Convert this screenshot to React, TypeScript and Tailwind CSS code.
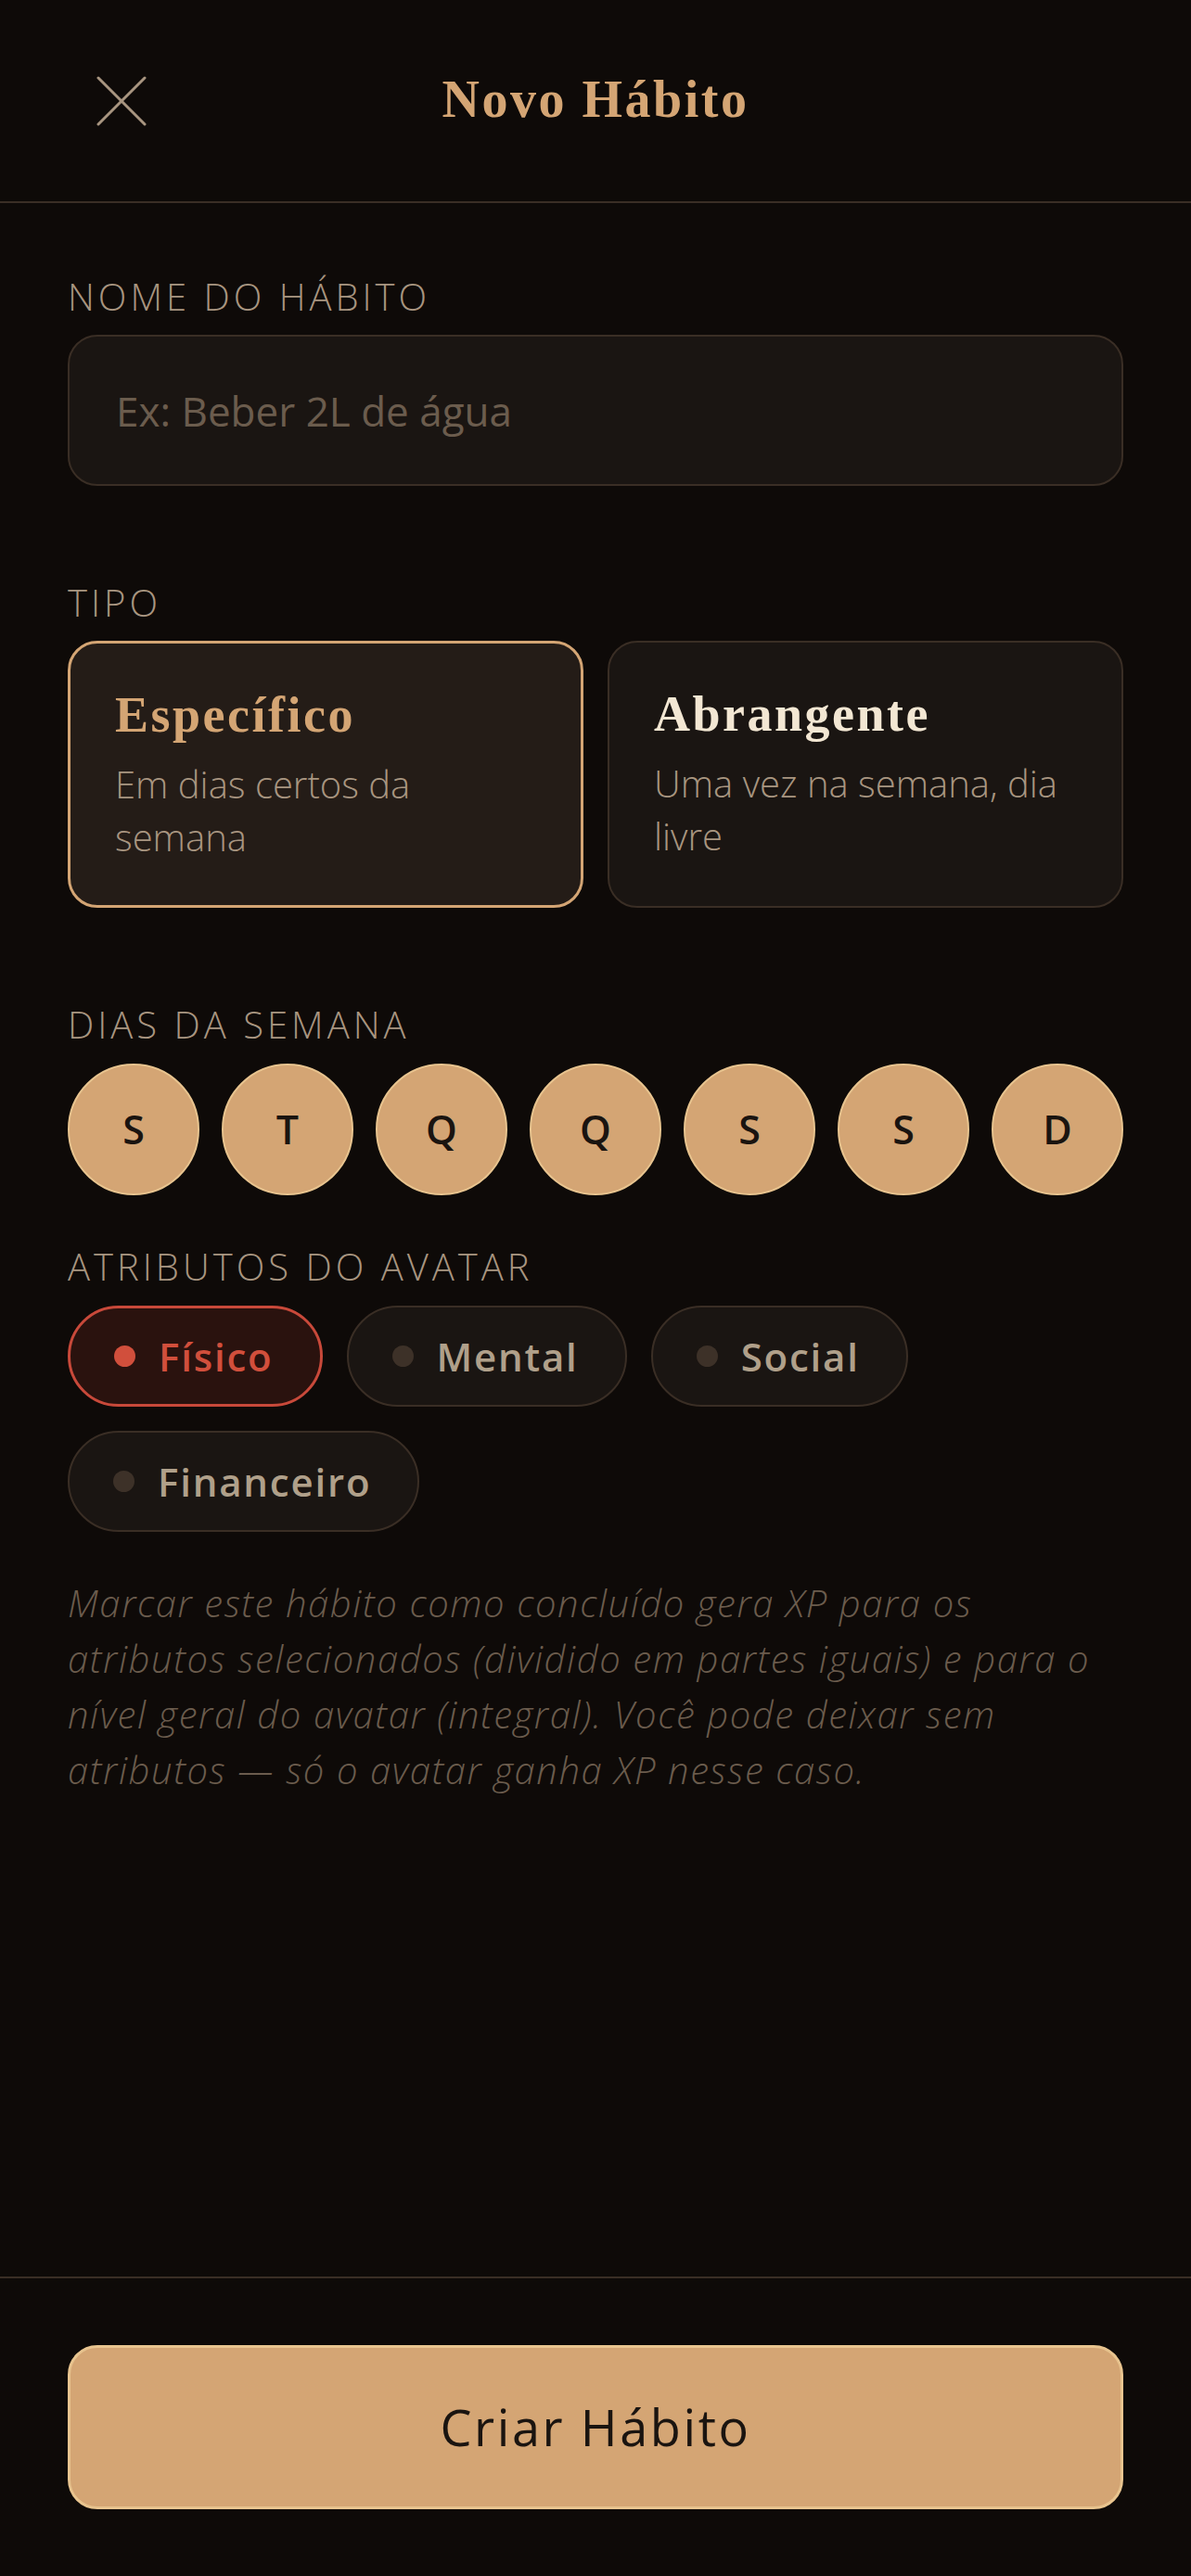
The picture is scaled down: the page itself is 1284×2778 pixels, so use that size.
import React, { useState } from 'react';

const DAYS = ['S', 'T', 'Q', 'Q', 'S', 'S', 'D'];

const ATTRS = [
  { id: 'fisico', label: 'Físico' },
  { id: 'mental', label: 'Mental' },
  { id: 'social', label: 'Social' },
  { id: 'financeiro', label: 'Financeiro' },
];

const Label: React.FC<{ children: React.ReactNode; className?: string }> = ({ children, className = '' }) => (
  <p className={`text-[40px] leading-[60px] font-light tracking-[4px] text-[#a89580] uppercase ${className}`}>{children}</p>
);

const App: React.FC = () => {
  const [tipo, setTipo] = useState<'especifico' | 'abrangente'>('especifico');
  const [attrs, setAttrs] = useState<string[]>(['fisico']);

  const toggleAttr = (id: string) =>
    setAttrs(prev => (prev.includes(id) ? prev.filter(a => a !== id) : [...prev, id]));

  return (
    <div
      className="flex flex-col h-[2778px] bg-[#0e0a08] text-[#a89580]"
      style={{ fontFamily: '"Open Sans", "Noto Sans", sans-serif' }}
    >
      {/* header */}
      <header className="h-[219px] shrink-0 flex items-center border-b-2 border-[#3a2e25] px-[73px]">
        <button className="w-[116px] h-[60px] flex items-center justify-start pl-[31px]">
          <svg width="54" height="54" viewBox="0 0 54 54" fill="none" stroke="#a89580" strokeWidth="3" strokeLinecap="round">
            <path d="M2 2 L52 52" />
            <path d="M52 2 L2 52" />
          </svg>
        </button>
        <h1
          className="flex-1 text-center text-[56px] leading-[66px] font-bold tracking-[2.5px] text-[#d4a574] -mt-[4px]"
          style={{ fontFamily: '"Liberation Serif", serif' }}
        >
          Novo Hábito
        </h1>
        <div className="w-[116px]" />
      </header>

      {/* form */}
      <main className="flex-1 px-[73px] pt-[71px]">
        <Label>Nome do hábito</Label>
        <input
          placeholder="Ex: Beber 2L de água"
          className="mt-[11px] w-full h-[163px] rounded-[32px] border-2 border-[#3a2e25] bg-[#1a1512] px-[50px] text-[44px] text-[#e8dcc8] placeholder:text-[#6b5c4d] outline-none"
        />

        <Label className="mt-[96px]">Tipo</Label>
        <div className="mt-[11px] grid grid-cols-2 gap-[26px]">
          {[
            { id: 'especifico' as const, title: 'Específico', desc: 'Em dias certos da semana' },
            { id: 'abrangente' as const, title: 'Abrangente', desc: 'Uma vez na semana, dia livre' },
          ].map(t => {
            const active = tipo === t.id;
            return (
              <button
                key={t.id}
                onClick={() => setTipo(t.id)}
                className={`h-[288px] rounded-[32px] text-left px-[48px] pt-[45px] flex flex-col items-start ${
                  active ? 'border-[3px] border-[#d4a574] bg-[#241c17]' : 'border-2 border-[#3a2e25] bg-[#1a1512]'
                }`}
              >
                <span
                  className={`text-[54px] leading-[65px] font-bold tracking-[2.5px] ${active ? 'text-[#d4a574]' : 'text-[#f3e7d3]'}`}
                  style={{ fontFamily: '"Liberation Serif", serif' }}
                >
                  {t.title}
                </span>
                <span className="mt-[13px] text-[40px] leading-[57px] font-light text-[#a89580]">{t.desc}</span>
              </button>
            );
          })}
        </div>

        <Label className="mt-[96px]">Dias da semana</Label>
        <div className="mt-[12px] flex justify-between">
          {DAYS.map((d, i) => (
            <button
              key={i}
              className="w-[142px] h-[142px] rounded-full bg-[#d4a574] border-2 border-[#e8c48f] flex items-center justify-center text-[43px] font-semibold text-[#1a1410]"
            >
              {d}
            </button>
          ))}
        </div>

        <Label className="mt-[47px]">Atributos do avatar</Label>
        <div className="mt-[12px] flex flex-wrap gap-[26px]">
          {ATTRS.map(a => {
            const active = attrs.includes(a.id);
            return (
              <button
                key={a.id}
                onClick={() => toggleAttr(a.id)}
                className={`h-[109px] rounded-full pl-[47px] pr-[50px] flex items-center gap-[25px] text-[42px] font-semibold tracking-[1.8px] ${
                  active
                    ? 'border-[3px] border-[#c8493a] bg-[#2a120e] text-[#d14f3c]'
                    : 'border-2 border-[#3a2e25] bg-[#1a1512] text-[#b0a08a]'
                }`}
              >
                <span className={`w-[23px] h-[23px] rounded-full ${active ? 'bg-[#d14f3c]' : 'bg-[#3d3128]'}`} />
                {a.label}
              </button>
            );
          })}
        </div>

        <p className="mt-[47px] pr-[20px] text-[40px] leading-[60px] font-light italic tracking-[1.6px] text-[#6b5c4d]">
          Marcar este hábito como concluído gera XP para os atributos selecionados (dividido em partes iguais) e para o
          nível geral do avatar (integral). Você pode deixar sem atributos — só o avatar ganha XP nesse caso.
        </p>
      </main>

      {/* footer */}
      <footer className="shrink-0 border-t-2 border-[#3a2e25] px-[73px] pt-[72px] pb-[72px]">
        <button className="w-full h-[177px] rounded-[32px] bg-[#d4a574] border-[3px] border-[#e8c48f] text-[54px] font-medium tracking-[2.6px] text-[#1a1410]">
          Criar Hábito
        </button>
      </footer>
    </div>
  );
};

export default App;
